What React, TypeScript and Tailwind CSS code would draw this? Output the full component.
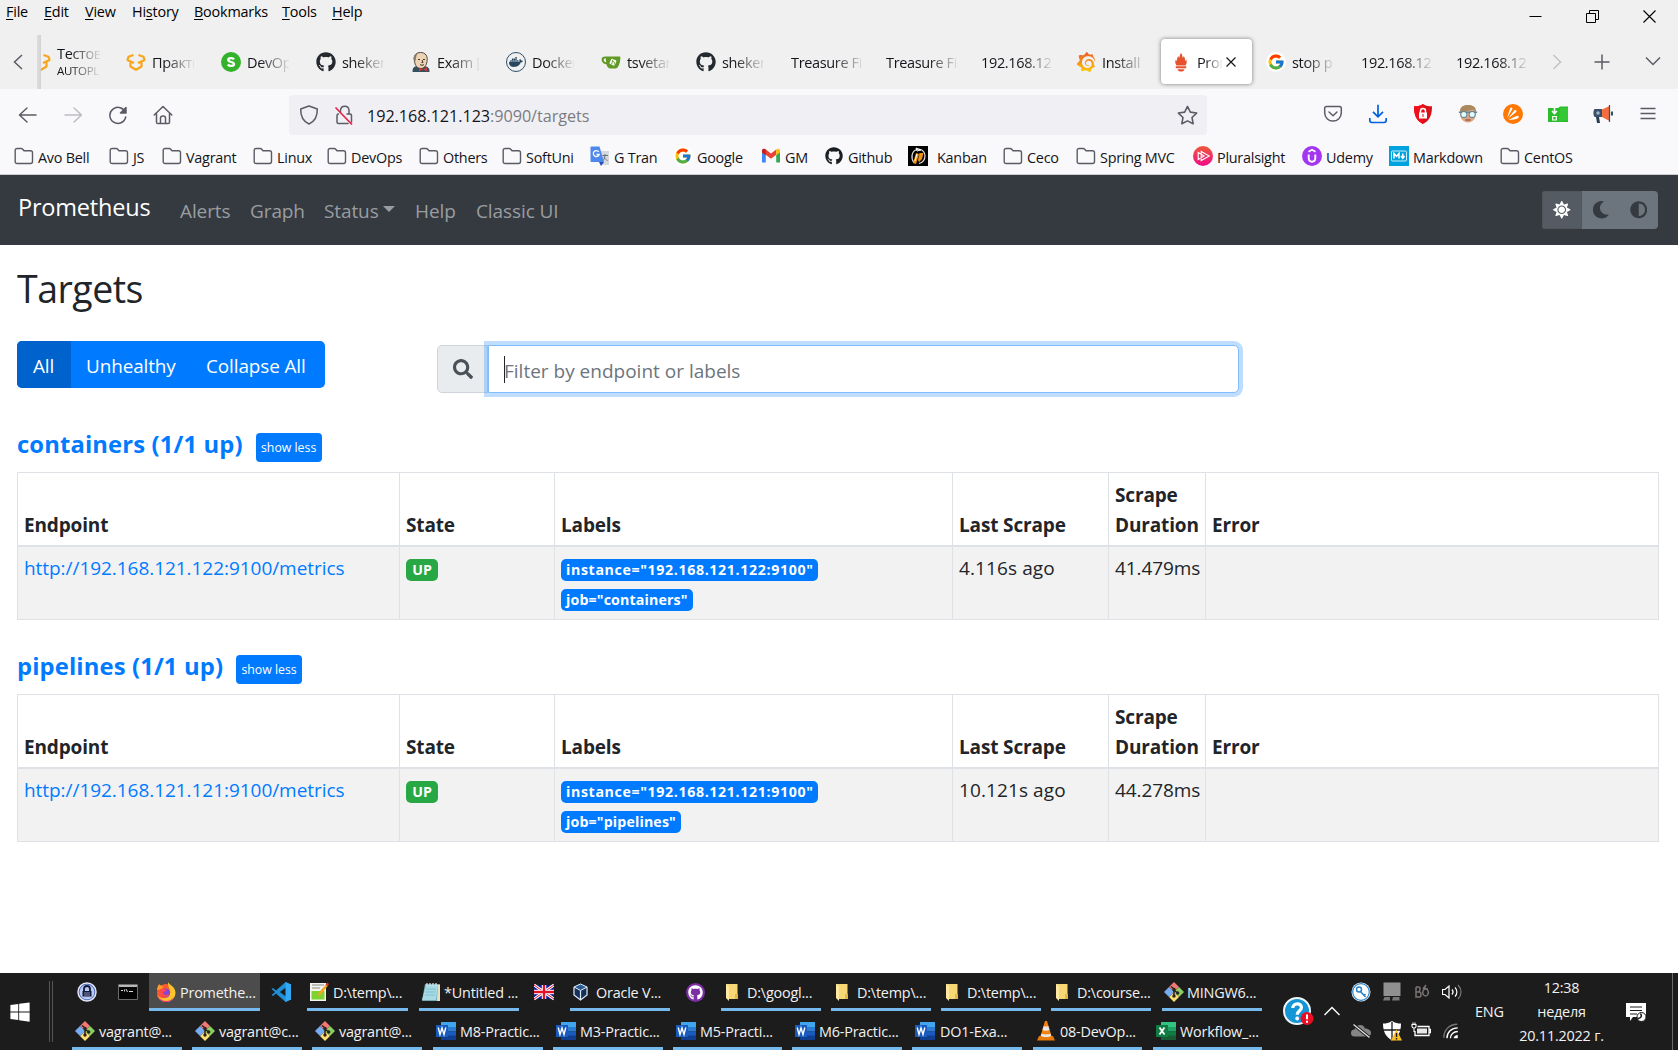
import React from "react";
import { FaGithub, FaSun, FaMoon, FaAdjust, FaSearch, FaWindows } from "react-icons/fa";
import { FcGoogle } from "react-icons/fc";
import { SiGrafana, SiDocker } from "react-icons/si";

type P = { children?: React.ReactNode; className?: string };

function Svg({ children, className = "size-5", box = "0 0 20 20" }: P & { box?: string }) {
  return (
    <svg viewBox={box} fill="none" className={`shrink-0 ${/size-|h-/.test(className) ? "" : "size-5"} ${className}`}>
      {children}
    </svg>
  );
}

/* ---------- browser icons ---------- */

const SoftUni = () => (
  <Svg>
    <path d="M7.500 3 2.500 4.700 1.500 8 4.500 9.500V14.500l5.500 3.300 5.500-3.300V9.500L18.500 8l-1-3.300L12.500 3" stroke="#f9a51a" strokeWidth="2.200" strokeLinejoin="round" />
    <path d="M4.500 9.500 8 11M15.500 9.500 12 11" stroke="#f9a51a" strokeWidth="2.200" />
  </Svg>
);
const SGreen = () => (
  <Svg>
    <circle cx="10" cy="10" r="10" fill="#35b22c" />
    <path d="M13 7.300C12 5.800 7.200 5.700 7.300 8c.1 2.300 5.600 1.700 5.700 4.100 0 2.300-4.800 2.300-6.200.4" stroke="#fff" strokeWidth="2.300" />
  </Svg>
);
const Jenkins = () => (
  <Svg>
    <path d="M1.500 20c0-4 1-5 4-6h8c4 1 5 2 5 6z" fill="#34505f" />
    <path d="M3.500 9C2 4 5 .5 9.500.5c5 0 7.500 3.500 6.500 9-.6 4.500-3 7-6 7-3.500 0-6-2.500-6.500-7.500z" fill="#eed3b4" stroke="#40362f" strokeWidth=".9" />
    <path d="M3 9C1.800 3 5 .4 8 .7 4.500 2.500 5.500 6 4.500 9z" fill="#8b7b6c" />
    <path d="M7 7.500h2M12 7.500h2M9 12.500c1 1 3 .9 4 0M11 8l1 2.500h-1.500" stroke="#40362f" />
    <path d="m12 17.300-4-1.800v4zM12 17.300l4-1.800v4z" fill="#d33833" />
  </Svg>
);
const Docker = () => (
  <span className="flex size-5 shrink-0 items-center justify-center rounded-full border-[1.5px] border-[#2d4f68] text-[14px] text-[#274660]">
    <SiDocker />
  </span>
);
const Gitea = () => (
  <Svg>
    <path d="M5 4.500h14.300c.4 6-2 11.500-4.300 12H9c-1.800-.3-3.200-2.300-3.600-4.200C2 12 .6 9.500.6 7.500c0-2 1.500-3.200 4.400-3z" fill="#609926" />
    <path d="M4.700 6.300c-2.500-.2-2.800 3.800.5 4.100z" fill="#f0f0f0" />
    <rect x="9.200" y="7.300" width="5.600" height="5.800" rx="1" transform="rotate(25 12 10)" fill="#fff" />
    <path d="m12 7.500-1.500 5M12 9.500c2 .3 1.500 1.500 1.200 3" stroke="#609926" strokeWidth=".9" />
  </Svg>
);
const Grafana = () => (
  <>
    <svg className="absolute size-0">
      <defs>
        <linearGradient id="graf" x1="0" y1="0" x2="0" y2="1">
          <stop offset="0" stopColor="#f05a28" />
          <stop offset="1" stopColor="#fbca0a" />
        </linearGradient>
      </defs>
    </svg>
    <SiGrafana className="size-5 shrink-0 fill-[url(#graf)]" />
  </>
);
const Prom = () => (
  <Svg>
    <path d="M10 1c1.800 2 .8 3.500 2 5 .5-.9.600-1.500.5-2.300 2 2.300 1.300 4.300 1.900 5.300.5-.4.700-1 .7-1.600 1.400 3 .2 4.300-.7 6.100H5.600C4.700 11.700 3.500 10.400 4.900 7.400c0 .6.200 1.200.7 1.600.6-1-.1-3 1.900-5.300-.1.800 0 1.400.5 2.300 1.200-1.500.2-3 2-5zM4.800 14.300h10.400v1.900H4.800zM6.600 17.200h6.800C13 19 11.800 19.600 10 19.600S7 19 6.600 17.200z" fill="#e6522c" />
  </Svg>
);
const Google = () => (
  <span className="flex size-5 shrink-0 items-center justify-center rounded-full bg-white">
    <FcGoogle className="size-[18px]" />
  </span>
);
const Folder = () => (
  <Svg>
    <path d="M1.200 15.500V4.500c0-1.300.7-2 2-2h4c.7 0 1.100.2 1.500.7l1.300 1.600h6.500c1.300 0 2 .7 2 2v8.700c0 1.300-.7 2-2 2H3.200c-1.300 0-2-.7-2-2z" stroke="#5b5b66" strokeWidth="1.400" />
  </Svg>
);
const GTran = () => (
  <Svg>
    <path d="M8 5h11v14h-7z" fill="#d5d8dc" />
    <path d="M1.500.5h8L14 16H1.500C.8 16 .5 15.500.5 15V1.500c0-.6.400-1 1-1z" fill="#4d88ee" />
    <path d="m9 16 5 0-3 4z" fill="#2350b8" />
    <path d="M8.800 5.800a3 3 0 1 0 .4 2.700H6.500" stroke="#fff" strokeWidth="1.300" />
    <path d="M12.500 9.500H18M15 8v1.500c-.2 2-1 4-2 5m1-3.500c1 2 2.500 3 3.500 3.500" stroke="#66727c" />
  </Svg>
);
const Gmail = () => (
  <Svg>
    <path d="M1 5v11.500h3.800V9z" fill="#4285f4" />
    <path d="M19 5v11.500h-3.800V9z" fill="#34a853" />
    <path d="M1 5c0-2 2-3 3.800-1.500L10 7.500l5.200-4v5.300L10 12.800 4.800 8.800 1 6.500z" fill="#ea4335" />
    <path d="M15.200 3.500C17 2 19 3 19 5v1.500l-3.800 2.700z" fill="#fbbc04" />
    <path d="M1 5c0-2 2-3 3.800-1.500v5.700L1 6.500z" fill="#c5221f" />
  </Svg>
);
const Kanban = () => (
  <Svg>
    <path d="M0 0h20v20H0z" fill="#000" />
    <path d="M6 17C2.500 12 3.500 5 9 3.500c4-1 8 1.500 8 6 0 4-2 7-6 8" stroke="#ddd" strokeWidth="1.200" />
    <path d="m5 17 3-10 3 1-3 10zM10 14l1.500-7h4L14 13l-3 3z" fill="#f39211" />
    <path d="m8 2 5 2-4 1zM9 8l-2 7" stroke="#fff" />
  </Svg>
);
const Plural = () => (
  <Svg>
    <defs>
      <linearGradient id="plural" x1="0" y1="0" x2="0" y2="1">
        <stop stopColor="#ee5a36" />
        <stop offset="1" stopColor="#f00a8c" />
      </linearGradient>
    </defs>
    <circle cx="10" cy="10" r="10" fill="url(#plural)" />
    <path d="m8.200 5.500 8 4.500-8 4.500zM5.200 6.500l6 3.500-6 3.500z" stroke="#fff" strokeWidth="1.100" />
  </Svg>
);
const Udemy = () => (
  <Svg>
    <circle cx="10" cy="10" r="10" fill="#a435f0" />
    <path d="M6.700 8.500V12c0 2.500 1.200 3.700 3.300 3.700s3.300-1.200 3.300-3.700V8.500M6.500 5.800 10 3.800l3.500 2" stroke="#fff" strokeWidth="1.900" />
  </Svg>
);
const Markdown = () => (
  <Svg>
    <path d="M0 0h20v20H0z" fill="#00a3dd" />
    <rect x="2.500" y="5" width="15" height="10" rx="1" stroke="#fff" strokeOpacity=".8" />
    <path d="M5 12.500v-5L7.500 10.300 10 7.500v5M13.800 7.500v4.200M12 10l1.800 2.300L15.600 10" stroke="#fff" strokeWidth="1.500" />
  </Svg>
);

/* ---------- browser ---------- */

const menu = [
  ["F", "ile", "", "w-[38px]"],
  ["E", "dit", "", "w-[41px]"],
  ["V", "iew", "", "w-[47px]"],
  ["s", "tory", "Hi", "w-[62px]"],
  ["B", "ookmarks", "", "w-[88px]"],
  ["T", "ools", "", "w-[50px]"],
  ["H", "elp", "", "w-[40px]"],
];

const tabs: { icon?: React.ReactNode; t: string; active?: boolean }[] = [
  { icon: <SoftUni />, t: "Практи" },
  { icon: <SGreen />, t: "DevOps" },
  { icon: <FaGithub className="size-5 shrink-0 text-[#24292f]" />, t: "sheker" },
  { icon: <Jenkins />, t: "Exam [" },
  { icon: <Docker />, t: "Docker" },
  { icon: <Gitea />, t: "tsvetan" },
  { icon: <FaGithub className="size-5 shrink-0 text-[#24292f]" />, t: "sheker" },
  { t: "Treasure Fi" },
  { t: "Treasure Fi" },
  { t: "192.168.12" },
  { icon: <Grafana />, t: "Install" },
  { icon: <Prom />, t: "Prom", active: true },
  { icon: <Google />, t: "stop p" },
  { t: "192.168.12" },
  { t: "192.168.12" },
];

const fade = "[mask-image:linear-gradient(to_right,#000_30%,transparent_105%)]";
const fadeWide = "[mask-image:linear-gradient(to_right,#000_60%,transparent_105%)]";

function TabStrip() {
  return (
    <div className="flex h-[61px] items-center pt-1.5 text-[14.5px] tracking-[-0.35px] text-[#15141a]">
      <Svg className="ml-[9px] size-5">
        <path d="m13 3-7.500 7 7.500 7" stroke="#5b5b66" strokeWidth="1.500" />
      </Svg>
      <div className="ml-2 h-[54px] w-1 shrink-0 self-end bg-linear-to-r from-[#dedede] to-[#d2d2d2]" />
      <div className="flex w-[75px] shrink-0 items-center overflow-hidden">
        <span className="-ml-2.5 shrink-0"><SoftUni /></span>
        <span className={`ml-1.5 flex w-[43px] shrink-0 flex-col overflow-hidden whitespace-nowrap ${fade}`}>
          <span className="leading-[19px]">Тестов</span>
          <span className="text-[11.5px] leading-4 tracking-[-0.3px]">AUTOPL</span>
        </span>
      </div>
      {tabs.map((tab, i) => (
        <div
          key={i}
          className={`mr-1 flex h-[45px] w-[91px] shrink-0 items-center pl-[10px] ${tab.active ? "rounded-[4px] bg-white shadow-[0_0_4px_rgba(0,0,0,0.5)]" : ""}`}
        >
          {tab.icon}
          <span
            className={`overflow-hidden whitespace-nowrap pt-0.5 ${tab.icon ? "ml-1.5" : ""} ${tab.active ? "w-[25px]" : tab.icon ? "w-[42px]" : "w-[70px]"} ${tab.icon ? fade : fadeWide}`}
          >
            {tab.t}
          </span>
          {tab.active && (
            <Svg className="ml-[3px] size-[12px]" box="0 0 12 12">
              <path d="m1.500 1.500 9 9m0-9-9 9" stroke="#15141a" strokeWidth="1.200" />
            </Svg>
          )}
        </div>
      ))}
      <Svg className="ml-[6px] size-5">
        <path d="m6.500 3 7 7-7 7" stroke="#c3c3c6" strokeWidth="1.500" />
      </Svg>
      <Svg className="ml-[25px] size-5">
        <path d="M10 2.500v15M2.500 10h15" stroke="#5b5b66" strokeWidth="1.500" />
      </Svg>
      <Svg className="ml-[31px] size-5">
        <path d="m3 5.500 7 7 7-7" stroke="#5b5b66" strokeWidth="1.500" />
      </Svg>
    </div>
  );
}

function Toolbar() {
  const s = { stroke: "#5b5b66", strokeWidth: 1.5, strokeLinecap: "round" as const, strokeLinejoin: "round" as const };
  return (
    <div className="flex h-[50px] items-center pl-[18px] pt-0.5">
      <div className="flex w-[271px] items-center gap-[25px]">
        <Svg><path d="M18 10H1.500m7.500-7-7.500 7 7.500 7" {...s} /></Svg>
        <Svg><path d="M2 10h16.500M11 3l7.500 7-7.500 7" {...s} stroke="#bcbcc2" /></Svg>
        <Svg><path d="M17.500 8a8 8 0 1 0 .2 4M18 2.500V8h-5.500z" {...s} /><path d="M18 2.500V8h-5.500z" fill="#5b5b66" /></Svg>
        <Svg><path d="m1.200 10 8.800-8.500 8.800 8.500M3.500 8.500v8.700c0 .9.500 1.400 1.400 1.400h10.200c.9 0 1.400-.5 1.400-1.400V8.500M7.500 18.500V13c0-1.300.9-2 2.500-2s2.500.7 2.500 2v5.500" {...s} /></Svg>
      </div>
      <div className="flex h-10 w-[918px] items-center rounded-[4px] bg-[#f0f0f4] pl-[10px]">
        <Svg><path d="m10 1 8.300 3C18.500 11 16.500 16 10 19 3.500 16 1.500 11 1.700 4z" {...s} /></Svg>
        <Svg className="ml-[15px] size-5">
          <path d="M6.500 7V5a4.300 4.300 0 0 1 8.500 0v3.500M13 9h3c1 0 1.500.5 1.500 1.500v6.500M14 18.500H4.500C3.500 18.500 3 18 3 17v-6.500C3 9.500 3.500 9 4.500 9" {...s} />
          <path d="m1.500 2.500 16.500 17" stroke="#e2254f" strokeWidth="1.700" />
        </Svg>
        <span className="ml-[13px] pt-[3px] text-[16.200px] tracking-[-0.050px] text-[#7b7b82]">
          <span className="text-[#15141a]">192.168.121.123</span>:9090/targets
        </span>
        <Svg className="ml-auto mr-[9px] size-[21px]">
          <path d="m10 1.300 2.700 5.500 6 .9-4.400 4.200 1.100 6-5.400-2.800-5.400 2.800 1.100-6L1.300 7.700l6-.9z" {...s} />
        </Svg>
      </div>
      <div className="-mt-0.5 ml-[116px] flex items-center gap-[25px]">
        <Svg><path d="M3.500 2.500h13c1.200 0 1.800.6 1.800 1.800v4.500a8.300 8.300 0 0 1-16.600 0V4.300c0-1.200.6-1.800 1.800-1.800zM6 8l4 3.700L14 8" {...s} /></Svg>
        <Svg><path d="M10 .8v12m-5-5 5 5 5-5M1.800 14v2.300c0 1.500.7 2.200 2.200 2.200h12c1.500 0 2.200-.7 2.200-2.200V14" stroke="#0061e0" strokeWidth="1.700" /></Svg>
        <Svg><path d="M10 0c3 2 6 2.300 9 2.300C19 11 17 16.500 10 20 3 16.500 1 11 1 2.300 4 2.300 7 2 10 0z" fill="#d9101a" /><path d="M10 0v20C3 16.500 1 11 1 2.300 4 2.300 7 2 10 0z" fill="#f0101c" /><path d="M6 8.500h8v6H6z" fill="#fff" /><path d="M7.500 9V7a2.500 2.500 0 0 1 5 0v2" stroke="#fff" strokeWidth="1.500" /><path d="M10 10v3" stroke="#d9101a" /></Svg>
        <Svg><path d="M2 9c-.5-6 3-8 8-8s8.500 2 8 8c-.3 6-3.500 9.500-8 9.500S2.300 15 2 9z" fill="#dca584" /><path d="M2 8C2 3 5 1 10 1s8 2 8 7l-3-2.500-6 1.500z" fill="#a98a60" /><path d="M.8 7.500h18.400V9H.8z" fill="#6d8790" /><circle cx="5.800" cy="10.500" r="3.500" fill="#5f8794" /><circle cx="14.200" cy="10.500" r="3.500" fill="#5f8794" /><circle cx="5.800" cy="10.500" r="2.500" fill="#e5f8fc" /><circle cx="14.200" cy="10.500" r="2.500" fill="#e5f8fc" /><path d="M7.500 16h5" stroke="#92553d" strokeWidth="1.300" /></Svg>
        <Svg><circle cx="10" cy="10" r="10" fill="#ff7800" /><path d="M4 14 7 4.500c.6-1.700 2.600-1.200 2.500.5zM4.800 14.800l6.400-8.300c1.200-1.200 2.900 0 2.100 1.600zM5.500 15.800l8.500-4c1.900-.5 2.500 1.600.9 2.400-2 1-5.400 1.600-9.400 1.600z" fill="#fff" /></Svg>
        <Svg><path d="M0 4h10l2-1.500h8V18H0z" fill="#2cbd2c" /><path d="M12 4h8v12l-9 1z" fill="#34c834" /><path d="M6.500 3.500v6m-2.500-2.500 2.500 2.500L9 7" stroke="#fff" strokeWidth="1.600" /><path d="M4.700 12.500h3.600v3.500H4.700z" stroke="#fff" strokeWidth="1.200" /></Svg>
        <Svg><path d="M1.500 5H9v8H1.500C0 11 0 7 1.500 5z" fill="#38506a" /><path d="M3 13h3l1 6H4z" fill="#293d52" /><path d="M9 5.500 16.500 2v15L9 13z" fill="#f36e3c" /><path d="M16.500 1v17M18.500 8h1v3h-1z" stroke="#38506a" strokeWidth="1.200" /><circle cx="5" cy="9" r="1.800" fill="#9eb4c8" /></Svg>
        <Svg><path d="M2.500 4.500h15M2.500 9.500h15M2.500 14.500h15" stroke="#5b5b66" strokeWidth="1.400" /></Svg>
      </div>
    </div>
  );
}

const bookmarks: [React.ReactNode, string, string][] = [
  [<Folder />, "Avo Bell", "w-[95px]"],
  [<Folder />, "JS", "w-[53px]"],
  [<Folder />, "Vagrant", "w-[91px]"],
  [<Folder />, "Linux", "w-[74px]"],
  [<Folder />, "DevOps", "w-[92px]"],
  [<Folder />, "Others", "w-[83px]"],
  [<Folder />, "SoftUni", "w-[88px]"],
  [<GTran />, "G Tran", "w-[83px]"],
  [<Google />, "Google", "w-[88px]"],
  [<Gmail />, "GM", "w-[63px]"],
  [<FaGithub className="mx-px size-[18px] shrink-0 text-[#1b1f23]" />, "Github", "w-[84px]"],
  [<span className="mr-[5px]"><Kanban /></span>, "Kanban", "w-[95px]"],
  [<Folder />, "Ceco", "w-[73px]"],
  [<Folder />, "Spring MVC", "w-[117px]"],
  [<Plural />, "Pluralsight", "w-[109px]"],
  [<Udemy />, "Udemy", "w-[87px]"],
  [<Markdown />, "Markdown", "w-[111px]"],
  [<Folder />, "CentOS", "w-[80px]"],
];

function Browser() {
  return (
    <header className="h-[175px] border-b border-[#ccccce] bg-[#f9f9fb]">
      <div className="bg-[#f0f0f0]">
        <div className="flex h-7 justify-between">
          <div className="flex pl-1.5 pt-px text-[14.400px] leading-[22px] tracking-[-0.2px] text-black">
            {menu.map(([u, rest, pre, w]) => (
              <span key={rest} className={w}>
                {pre}
                <span className="underline underline-offset-2">{u}</span>
                {rest}
              </span>
            ))}
          </div>
          <div className="flex gap-11 pr-[22px] pt-[10px]">
            <Svg className="size-[13px]" box="0 0 13 13"><path d="M.5 6.500h12" stroke="#000" /></Svg>
            <Svg className="size-[13px]" box="0 0 13 13"><path d="M.5 3.500h9v9h-9zM3.500 3.500v-3h9v9h-3" stroke="#000" /></Svg>
            <Svg className="size-[13px]" box="0 0 13 13"><path d="m.5.5 12 12m0-12-12 12" stroke="#000" strokeWidth="1.100" /></Svg>
          </div>
        </div>
        <TabStrip />
      </div>
      <Toolbar />
      <div className="flex h-[35px] items-center pl-[14px] text-[14.400px] tracking-[-0.25px] text-[#15141a]">
        {bookmarks.map(([icon, t, w]) => (
          <div key={t} className={`flex shrink-0 items-center gap-[4px] whitespace-nowrap ${w}`}>
            {icon}
            <span className="pt-0.5">{t}</span>
          </div>
        ))}
      </div>
    </header>
  );
}

/* ---------- Prometheus page ---------- */

function NavBar() {
  return (
    <nav className="flex h-[70px] items-center bg-[#343a40] pl-[18px] pr-5 text-[19px] tracking-[-0.1px] text-[#9a9da0]">
      <span className="w-[162px] pb-1 text-[23.500px] tracking-[-0.2px] text-white">Prometheus</span>
      <span className="w-[70px] pt-[3px]">Alerts</span>
      <span className="w-[74px] pt-[3px]">Graph</span>
      <span className="flex w-[91px] items-center pt-[3px]">
        Status
        <span className="-mt-1.5 ml-1 border-x-[6px] border-t-[6px] border-x-transparent border-t-[#9a9da0]" />
      </span>
      <span className="w-[61px] pt-[3px]">Help</span>
      <span className="pt-[3px]">Classic UI</span>
      <div className="ml-auto flex h-[38px] overflow-hidden rounded-[4px] bg-[#6c757d] text-[#343a40]">
        <span className="flex w-10 items-center justify-center border border-[#4e555b] bg-[#545b62] text-white"><FaSun className="size-[17.500px]" /></span>
        <span className="flex w-[37px] items-center justify-center"><FaMoon className="size-[17.500px]" /></span>
        <span className="flex w-[39px] items-center justify-center"><FaAdjust className="size-[17.500px]" /></span>
      </div>
    </nav>
  );
}

const th = "border border-[#dee2e6] border-b-2 px-1.5 pb-[5px] align-bottom text-left font-bold tracking-[-0.15px]";
const td = "border border-[#dee2e6] px-1.5 pt-[6px] align-top";
const badge = "rounded-[5px] px-[5px] text-[14.200px] font-bold leading-[22px] text-white";

type Pool = { name: string; host: string; ago: string; dur: string };

function TargetPool({ name, host, ago, dur }: Pool) {
  return (
    <section className="h-[222px]">
      <div className="flex h-[51px] items-start">
        <h3 className="text-[23.800px] font-bold leading-[46px] tracking-[0.130px] text-[#007bff]">{name} (1/1 up)</h3>
        <button className="ml-[13px] mt-3 h-[29px] w-[66px] rounded-[4px] bg-[#007bff] pt-0.5 text-[12.300px] text-white">show less</button>
      </div>
      <table className="w-[1642px] table-fixed border-collapse text-[19px] leading-[30px] text-[#212529]">
        <colgroup>
          <col className="w-[382px]" />
          <col className="w-[155px]" />
          <col className="w-[398px]" />
          <col className="w-[156px]" />
          <col className="w-[97px]" />
          <col />
        </colgroup>
        <thead>
          <tr className="h-[73px]">
            <th className={th}>Endpoint</th>
            <th className={th}>State</th>
            <th className={th}>Labels</th>
            <th className={th}>Last Scrape</th>
            <th className={th}>Scrape Duration</th>
            <th className={th}>Error</th>
          </tr>
        </thead>
        <tbody>
          <tr className="h-[74px] bg-[#f2f2f2]">
            <td className={td}><span className="tracking-[-0.050px] text-[#007bff]">http://{host}/metrics</span></td>
            <td className={td}><span className={`mt-1.5 block w-8 bg-[#28a745] text-center ${badge}`}>UP</span></td>
            <td className={td}>
              <div className="mt-1.5 flex flex-col items-start gap-2">
                <span className={`bg-[#007bff] tracking-[0.630px] ${badge}`}>instance="{host}"</span>
                <span className={`bg-[#007bff] tracking-[0.150px] ${badge}`}>job="{name}"</span>
              </div>
            </td>
            <td className={`${td} tracking-[0.1px]`}>{ago}</td>
            <td className={`${td} tracking-[-0.1px]`}>{dur}</td>
            <td className={td} />
          </tr>
        </tbody>
      </table>
    </section>
  );
}

function TargetsPage() {
  return (
    <main className="h-[728px] bg-white pl-[17px]">
      <h2 className="pt-[13px] text-[37.500px] leading-[61px] tracking-[-0.5px] text-[#212529]">Targets</h2>
      <div className="mt-[22px] flex h-[56px]">
        <div className="flex h-[47px] w-[308px] overflow-hidden rounded-[5px] bg-[#007bff] text-[18.900px] leading-[51px] tracking-[-0.1px] text-white">
          <span className="w-[54px] bg-[#0062cc] pl-4">All</span>
          <span className="w-[120px] pl-[15px]">Unhealthy</span>
          <span className="pl-[15px]">Collapse All</span>
        </div>
        <div className="ml-[112px] mt-1 flex h-12">
          <div className="flex w-[51px] items-center justify-center rounded-l-[5px] border border-[#ced4da] bg-[#e9ecef] text-[#495057]">
            <FaSearch className="size-5" />
          </div>
          <div className="flex w-[751px] items-center rounded-r-[5px] border border-[#80bdff] bg-white pl-[15px] text-[19px] text-[#6c757d] shadow-[0_0_0_4px_rgba(0,123,255,0.25)]">
            <span className="h-[27px] w-px bg-[#212529]" />
            <span className="-ml-px pt-1">Filter by endpoint or labels</span>
          </div>
        </div>
      </div>
      <div className="mt-6">
        <TargetPool name="containers" host="192.168.121.122:9100" ago="4.116s ago" dur="41.479ms" />
        <TargetPool name="pipelines" host="192.168.121.121:9100" ago="10.121s ago" dur="44.278ms" />
      </div>
    </main>
  );
}

/* ---------- taskbar ---------- */

const GitBash = () => (
  <Svg>
    <path d="m10 0 5 5-5 5-5-5z" fill="#f07a73" />
    <path d="m15 5 5 5-5 5-5-5z" fill="#8ccf62" />
    <path d="m10 10 5 5-5 5-5-5z" fill="#fbdf72" />
    <path d="m5 5 5 5-5 5-5-5z" fill="#77abf3" />
    <path d="M7 4.500 10 7v7.500M10 8l3.500 3" stroke="#2b241f" strokeWidth="1.500" />
    <circle cx="10" cy="14" r="1.700" fill="#2b241f" /><circle cx="13.700" cy="11" r="1.700" fill="#2b241f" /><circle cx="10" cy="7.500" r="1.700" fill="#2b241f" />
  </Svg>
);
const Office = ({ excel }: { excel?: boolean }) => (
  <Svg>
    <path d="M5 1h15v5H5z" fill={excel ? "#33c481" : "#41a5ee"} />
    <path d="M5 6h15v4.500H5z" fill={excel ? "#21a366" : "#2b7cd3"} />
    <path d="M5 10.500h15V15H5z" fill={excel ? "#107c41" : "#185abd"} />
    <path d="M5 14.500h15V19H5z" fill={excel ? "#185c37" : "#103f91"} />
    <path d="M0 4h12v12H0z" fill={excel ? "#107c41" : "#185abd"} />
    {excel ? <path d="m3.500 6.500 5 7m0-7-5 7" stroke="#fff" strokeWidth="1.800" /> : <path d="m2.200 6.500 1.800 7 2-6.500 2 6.500 1.800-7" stroke="#fff" strokeWidth="1.400" />}
  </Svg>
);
const Explorer = () => (
  <Svg>
    <path d="M3 2h11.500v15H5z" fill="#f7d774" />
    <path d="M3 2v14l3 3V4.500z" fill="#ffe9a2" />
    <path d="M12 12h3v5h-3z" fill="#dfb54c" />
  </Svg>
);
const Firefox = () => (
  <Svg>
    <circle cx="10" cy="11" r="9" fill="#ff5a2c" />
    <path d="M12 0c1 3 7 4 7.500 10.500C19.500 17 14 20 10 20 5 20 2 16 1 13c4 5 11 4 13-1 1.500-4-2.500-6-2-12z" fill="#ffc42e" />
    <path d="M1 8c0-3 1.500-4.500 2-6 1 1.500 3 2 4.500 2L5 8z" fill="#ff9a29" />
    <circle cx="9.500" cy="11" r="4.500" fill="#8344d8" />
    <path d="M3 8c3-2.500 6-.5 8 .5-2 1-3 1-4 1.500 0 3 4 4 6.500 1.500C13 16 5 17 3.500 12z" fill="#ff4a4a" />
    <path d="M1 12c2 7 12 10 17 3-3 7-14 7.500-17-3z" fill="#f0307d" />
  </Svg>
);
const Vscode = () => (
  <Svg>
    <path d="m14.500 0 5.500 2.500v15L14.500 20 5 11.500 2 14 .5 13 4 10 .5 7 2 6l3 2.500z" fill="#1f8fd8" />
    <path d="M15 5.500v9L8.800 10z" fill="#1c1c1c" />
    <path d="m14.500 0 5.500 2.500v15L14.500 20z" fill="#32a9f2" />
  </Svg>
);
const NotepadPP = () => (
  <Svg>
    <path d="M1 1h16v18H1z" fill="#f4f6ec" />
    <path d="M2.500 9h13v8.500h-13z" fill="#7bd431" />
    <path d="M3 3h12M3 6h8" stroke="#888" />
    <path d="m9 14 .7-3.500L17 2.500l1.700 1.500-7 8.500z" fill="#f5a623" />
    <path d="m16.500 2.500 2 1.800L20 2 18 .5z" fill="#cf3a2d" />
  </Svg>
);
const Notepad = () => (
  <Svg>
    <path d="M4 2h15v17H1z" fill="#76aab5" />
    <path d="M5 3h12l-2 15H1z" fill="#a6dbe4" />
    <path d="M17 3h2v16h-3z" fill="#e7e0c5" />
    <path d="M6 1v3M9 1v3M12 1v3M15 1v3" stroke="#d9e3e6" strokeWidth="1.300" />
    <path d="M5 7h10M4.500 10h10M4 13h10" stroke="#7fc0cd" />
  </Svg>
);
const VBox = () => (
  <Svg>
    <path d="m9.500 1 7.500 3.500v9L9.500 19 2 13.500v-9z" fill="#12305a" />
    <path d="m9.500 2 6.500 3-6.500 3.500L3 5z" fill="#2c5c93" stroke="#e7eef5" />
    <path d="M9.500 8.500V18M3 5v8l6.500 5 6.500-5V5" stroke="#dfe8f1" strokeWidth="1.200" />
  </Svg>
);
const Vlc = () => (
  <Svg>
    <path d="M3 15h14l2 4.500H1z" fill="#e8790b" />
    <path d="M9 0h2l4.500 15c-1.500 2-9.500 2-11 0z" fill="#f38411" />
    <path d="m7.700 5-1.200 4c1.500 1 5.500 1 7 0l-1.200-4c-1 .7-3.600.7-4.600 0zM5.500 12.500l-.7 2.300c1.700 1.600 8.700 1.600 10.400 0l-.7-2.300c-2 1.200-7 1.200-9 0z" fill="#e8e8e8" />
  </Svg>
);
const Cmd = () => (
  <Svg>
    <path d="M.5 2.500h19v15H.5z" fill="#050505" stroke="#6d6d6d" />
    <path d="M1 3h18v2H1z" fill="#b8b8b8" />
    <path d="M3 8.500h2M6.500 7.500v2M8 7l1.500 3M11 9.500h4" stroke="#ddd" />
  </Svg>
);
const LockRound = () => (
  <Svg>
    <circle cx="10" cy="10" r="9" fill="#3555b8" stroke="#e3e8f4" strokeWidth="1.500" />
    <circle cx="10" cy="10" r="7.500" fill="#b9c9f2" />
    <path d="M5.500 9h9v5.500h-9z" fill="#111a3a" />
    <path d="M7 9V7a3 3 0 0 1 6 0v2" stroke="#111a3a" strokeWidth="1.800" />
    <path d="M7 11h6M7 13h6" stroke="#b9c9f2" strokeWidth=".7" />
  </Svg>
);
const Flag = () => (
  <Svg>
    <path d="M0 3h20v14H0z" fill="#0a1b93" />
    <path d="m0 3 20 14M20 3 0 17" stroke="#fff" strokeWidth="3" />
    <path d="m0 3 20 14M20 3 0 17" stroke="#e3122b" />
    <path d="M10 3v14M0 10h20" stroke="#fff" strokeWidth="4.500" />
    <path d="M10 3v14M0 10h20" stroke="#e3122b" strokeWidth="2.400" />
  </Svg>
);
const GithubDesk = () => (
  <span className="flex size-[19px] items-center justify-center rounded-full bg-[#7b2fa5]">
    <FaGithub className="size-[15px] text-white" />
  </span>
);

type Task = { icon: React.ReactNode; t?: string; w: string; gap?: string; active?: boolean };

const row1: Task[] = [
  { icon: <LockRound />, w: "w-5 ml-[77px]" },
  { icon: <Cmd />, w: "w-5 ml-[21px]" },
  { icon: <Firefox />, t: "Promethe...", w: "w-[111px] ml-[11px] pl-[7px]", active: true },
  { icon: <Vscode />, w: "w-5 ml-[11px]" },
  { icon: <NotepadPP />, t: "D:\\temp\\...", w: "w-[101px] ml-4 pl-0.5", gap: "ml-[4px]" },
  { icon: <Notepad />, t: "*Untitled ...", w: "w-[100px] ml-[11px] pl-0.5", gap: "ml-[3px]" },
  { icon: <Flag />, w: "w-5 ml-[15px]" },
  { icon: <VBox />, t: "Oracle V...", w: "w-[100px] ml-4 pl-px", gap: "ml-[5px]" },
  { icon: <GithubDesk />, w: "w-5 ml-4" },
  { icon: <Explorer />, t: "D:\\googl...", w: "w-[100px] ml-[15px] pl-0.5" },
  { icon: <Explorer />, t: "D:\\temp\\...", w: "w-[100px] ml-[10px] pl-0.5" },
  { icon: <Explorer />, t: "D:\\temp\\...", w: "w-[100px] ml-[10px] pl-0.5" },
  { icon: <Explorer />, t: "D:\\course...", w: "w-[100px] ml-[10px] pl-0.5" },
  { icon: <GitBash />, t: "MINGW6...", w: "w-[100px] ml-[11px] pl-0.5", gap: "ml-[3px]" },
];
const row2: Task[] = [
  { icon: <GitBash />, t: "vagrant@...", w: "w-[110px] ml-[72px] pl-[3px]" },
  { icon: <GitBash />, t: "vagrant@c...", w: "w-[110px] ml-[10px] pl-[3px]" },
  { icon: <GitBash />, t: "vagrant@...", w: "w-[110px] ml-[10px] pl-[3px]" },
  { icon: <Office />, t: "M8-Practic...", w: "w-[110px] ml-[11px] pl-[3px]" },
  { icon: <Office />, t: "M3-Practic...", w: "w-[110px] ml-[10px] pl-[3px]" },
  { icon: <Office />, t: "M5-Practi...", w: "w-[109px] ml-[10px] pl-[3px]" },
  { icon: <Office />, t: "M6-Practic...", w: "w-[110px] ml-[10px] pl-[3px]" },
  { icon: <Office />, t: "DO1-Exa...", w: "w-[110px] ml-[10px] pl-[3px]", gap: "ml-[5px]" },
  { icon: <Vlc />, t: "08-DevOp...", w: "w-[109px] ml-[11px] pl-[3px]" },
  { icon: <Office excel />, t: "Workflow_...", w: "w-[109px] ml-[11px] pl-[3px]" },
];

function TaskRow({ items, h, drop }: { items: Task[]; h: string; drop: string }) {
  return (
    <div className={`flex ${h}`}>
      {items.map((it, i) => (
        <div
          key={i}
          className={`flex shrink-0 items-center whitespace-nowrap border-b-[3px] ${drop} ${it.w} ${it.t ? "border-[#76b9ed]" : "border-transparent"} ${it.active ? "bg-[#4c4c4c]" : ""}`}
        >
          {it.icon}
          {it.t && <span className={`pt-px ${it.gap ?? "ml-1"}`}>{it.t}</span>}
        </div>
      ))}
    </div>
  );
}

function Tray() {
  return (
    <div className="flex flex-1 items-center">
      <Svg className="ml-[21px] h-[30px] w-[31px]" box="0 0 31 30">
        <circle cx="14" cy="14" r="13" fill="#1496d6" stroke="#eef6fa" strokeWidth="2" />
        <path d="M9.800 11c0-5.500 8.800-5.500 8.600-.3-.1 3-4.200 3.300-4.200 7" stroke="#fff" strokeWidth="3.200" />
        <circle cx="14.200" cy="21.500" r="1.900" fill="#fff" />
        <circle cx="24" cy="21.500" r="6.500" fill="#e81123" />
        <path d="M24 17.500v4.700M24 23.700v2" stroke="#fff" strokeWidth="2" />
      </Svg>
      <Svg className="ml-[9px] h-5 w-[18px]" box="0 0 18 20">
        <path d="m1.500 13 7.500-7.500 7.500 7.500" stroke="#fff" strokeWidth="1.400" />
      </Svg>
      <div className="ml-[10px] grid w-[111px] grid-cols-[31px_29px_31px_20px] gap-y-[19px]">
        <Svg><circle cx="10" cy="10" r="9.500" fill="#fff" /><circle cx="10" cy="10" r="8.300" stroke="#2b83c8" strokeWidth="1.200" /><circle cx="8" cy="7.500" r="2.500" stroke="#2b83c8" strokeWidth="1.500" /><path d="m9.500 9.500 5 5.500m-1.500-1.500 1.500-1.500" stroke="#2b83c8" strokeWidth="1.600" /></Svg>
        <Svg><path d="M1.500.5h17V14h-17z" fill="#909090" /><path d="M1 18.500 2.500 15H8v3.500zM10 18.500l1-3.500h6.500v3.500z" fill="#777" /></Svg>
        <Svg><path d="M5 5v10h3.500c2 0 2-4.500 0-5H5m0-5h2.500c2 0 2 4 0 5M15 3l-3 4m2.500 0a2.800 3.500 0 1 0 .1 0M14 4v3h3" stroke="#7a7472" strokeWidth="1.500" /></Svg>
        <Svg><path d="M.5 7.500H3l4-3.500v12l-4-3.500H.5z" stroke="#fff" strokeWidth="1.200" /><path d="M10 7.500c1.300 1.500 1.300 3.500 0 5M13 5.500c2.500 2.500 2.500 6.500 0 9" stroke="#fff" strokeWidth="1.200" /><path d="M16 3c4 4 4 10 0 14" stroke="#777" strokeWidth="1.200" /></Svg>
        <Svg><path d="M3.500 15.500a3.500 3.500 0 0 1 0-7C5 3 12.500 2.500 14 7.500c3 0 6 1.500 6 4.500 0 2-1.500 3.500-3.500 3.500z" fill="#858585" /><path d="m2.500 3.500 16 13" stroke="#1c1c1c" strokeWidth="3" /><path d="m2.500 3.500 16 13" stroke="#e8e8e8" strokeWidth="1.200" /></Svg>
        <Svg><path d="M10 0c3 2 6 2.500 9 2.500C19 11 16 16 10 19.500 4 16 1 11 1 2.500 4 2.500 7 2 10 0z" fill="#fff" /><path d="M10 1v18M1 9h18" stroke="#1c1c1c" strokeWidth="1.300" /><path d="M14.500 8.500 20 19.500H9z" fill="#fbbf24" /><path d="M14.500 12v4M14.500 17v1.500" stroke="#1c1c1c" strokeWidth="1.400" /></Svg>
        <Svg><path d="M6.500 5.500H18v9H4V10.500M18.500 8.500h1v3h-1" stroke="#fff" strokeWidth="1.300" /><path d="M1 3.500h4v2c0 2-4 2-4 0zM2 1.500v2M4 1.500v2M3 7.500v3h1.500" stroke="#fff" strokeWidth="1.100" /><path d="M6 7.500h10v5H6z" fill="#fff" opacity=".9" /></Svg>
        <Svg className="mt-px size-[18px]"><path d="M2 17.500C2 9 8 2.500 17 2.500" stroke="#777" strokeWidth="1.500" /><path d="M5.500 18c0-6.500 5-11.500 12-11.500M9.300 18c0-4 3.500-7.500 8.200-7.500" stroke="#fff" strokeWidth="1.500" /><path d="M13 18c0-2 2-3.500 4.500-3.500V18z" fill="#fff" /></Svg>
      </div>
      <span className="ml-[13px] w-[43px]">ENG</span>
      <div className="w-[87px] whitespace-nowrap text-center leading-6">
        <div>12:38</div>
        <div>неделя</div>
        <div>20.11.2022 г.</div>
      </div>
      <Svg className="ml-[21px] size-5">
        <path d="M0 1h20v14H7l-3 4v-4H0z" fill="#fff" />
        <path d="M4 5h12M4 8.500h12M4 12h7" stroke="#1c1c1c" strokeWidth="1.200" />
        <circle cx="15.500" cy="15" r="4.500" fill="#fff" stroke="#1c1c1c" strokeWidth="1" />
        <path d="M14.500 11.500c2 3 0 5-3 5" stroke="#1c1c1c" strokeWidth="1.500" />
      </Svg>
      <div className="ml-auto mr-[5px] h-full w-px bg-[#6a6a6a]" />
    </div>
  );
}

function Taskbar() {
  return (
    <footer className="flex h-[77px] bg-[#1c1c1c] text-[14.400px] tracking-[-0.2px] text-[#f2f2f2]">
      <div className="flex w-0 items-center overflow-visible">
        <FaWindows className="ml-[9px] size-[22px] shrink-0 text-white" />
        <div className="ml-[18px] h-[61px] w-1 shrink-0 border-x border-[#565656]" />
      </div>
      <div className="flex w-[1262px] flex-col">
        <TaskRow items={row1} h="h-[38px]" drop="pt-[3px]" />
        <TaskRow items={row2} h="h-[39px]" drop="pt-1" />
      </div>
      <Tray />
    </footer>
  );
}

export default function App() {
  return (
    <div className='h-[1050px] w-[1678px] overflow-hidden bg-white font-["Open_Sans","Noto_Sans",sans-serif]'>
      <Browser />
      <NavBar />
      <TargetsPage />
      <Taskbar />
    </div>
  );
}
